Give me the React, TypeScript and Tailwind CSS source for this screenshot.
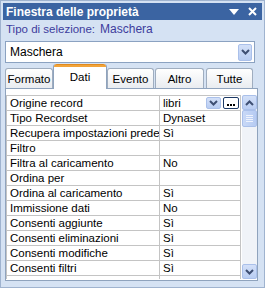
import React from "react";

const rows: [string, string][] = [
  ["Origine record", "libri"],
  ["Tipo Recordset", "Dynaset"],
  ["Recupera impostazioni predefinite", "Sì"],
  ["Filtro", ""],
  ["Filtra al caricamento", "No"],
  ["Ordina per", ""],
  ["Ordina al caricamento", "Sì"],
  ["Immissione dati", "No"],
  ["Consenti aggiunte", "Sì"],
  ["Consenti eliminazioni", "Sì"],
  ["Consenti modifiche", "Sì"],
  ["Consenti filtri", "Sì"],
  ["Blocco record", "Nessun blocco"],
];

function Chevron({ up = false }: { up?: boolean }) {
  return (
    <svg width="9" height="6" viewBox="0 0 9 6">
      <path
        d={up ? "M1 5 L4.5 1.5 L8 5" : "M1 1 L4.5 4.5 L8 1"}
        fill="none"
        stroke="#3e4f73"
        strokeWidth="2"
      />
    </svg>
  );
}

function Tab({ label, w, active = false, extra = "" }: { label: string; w: string; active?: boolean; extra?: string }) {
  if (active) {
    return (
      <div
        className={`${w} ${extra} h-[25px] -mb-px relative z-10 bg-white border-x border-[#8fa3bd] rounded-t-[3px] flex flex-col`}
      >
        <div className="h-[3px] bg-[#f2a43a] rounded-t-[3px] border-t border-[#e08a1e]" />
        <div className="flex-1 flex items-center justify-center pb-[2px] text-black">{label}</div>
      </div>
    );
  }
  return (
    <div
      className={`${w} ${extra} h-[20px] bg-gradient-to-b from-white to-[#e9ecf0] border-x border-t border-[#9fadbf] rounded-t-[3px] flex items-center justify-center text-black`}
    >
      {label}
    </div>
  );
}

export default function App() {
  return (
    <div className="w-[265px] h-[288px] bg-[#d5e2f3] border border-[#9fb3cf] pt-[2px] px-[2px] flex flex-col overflow-hidden font-['Liberation_Sans',Arial,sans-serif] text-[12px] leading-[14px]">
      {/* Title bar */}
      <div className="h-[17px] bg-[#3b64a2] flex items-center pl-[3px] pr-[5px] text-white font-bold shrink-0">
        <span>Finestra delle proprietà</span>
        <div className="ml-auto flex items-center gap-[9px]">
          <svg width="10" height="6" viewBox="0 0 10 6">
            <path d="M0 0 L10 0 L5 6 Z" fill="#ffffff" />
          </svg>
          <svg width="9" height="9" viewBox="0 0 9 9">
            <path d="M1 1 L8 8 M8 1 L1 8" stroke="#ffffff" strokeWidth="2" />
          </svg>
        </div>
      </div>

      {/* Selection type */}
      <div className="h-[17px] flex items-center pl-[3px] text-[#3d3c9d] text-[11.5px] shrink-0">
        <span>Tipo di selezione:</span>
        <span className="ml-[5px] text-[12px]">Maschera</span>
      </div>

      {/* Combo */}
      <div className="mt-[4px] ml-[2px] w-[250px] h-[22px] bg-white border border-[#8ba2c1] flex items-center pl-[4px] pr-[2px] shrink-0 text-black">
        <span>Maschera</span>
        <div className="ml-auto w-[14px] h-[17px] bg-gradient-to-b from-[#d3e0f8] to-[#b9cdf2] border border-[#aac0ea] rounded-[2px] flex items-center justify-center">
          <Chevron />
        </div>
      </div>

      {/* Tabs */}
      <div className="mt-[1px] h-[24px] flex items-end shrink-0 relative z-10 text-[11.5px]">
        <Tab label="Formato" w="w-[48px]" extra="ml-[2px]" />
        <Tab label="Dati" w="w-[54px]" active />
        <Tab label="Evento" w="w-[47px]" />
        <Tab label="Altro" w="w-[49px]" extra="ml-[1px]" />
        <Tab label="Tutte" w="w-[47px]" extra="ml-[2px]" />
      </div>

      {/* Panel */}
      <div className="ml-[2px] w-[253px] h-[193px] bg-white border border-[#8fa3bd] pt-[6px] pb-[1px] flex shrink-0">
        <div className="w-[235px] h-full overflow-hidden border-l border-t border-r border-[#c4c4c4] text-[11.5px]">
          {rows.map(([name, value], i) => (
            <div key={i} className="h-[15px] border-b border-[#c4c4c4] flex text-black">
              <div className="w-[152px] pl-[3px] whitespace-nowrap overflow-hidden flex items-center">{name}</div>
              <div className="flex-1 border-l border-[#c4c4c4] pl-[3px] flex items-center whitespace-nowrap overflow-hidden">
                <span>{value}</span>
                {i === 0 && (
                  <div className="ml-auto flex items-center gap-[2px] pr-[1px]">
                    <div className="w-[15px] h-[12px] bg-gradient-to-b from-[#d3e0f8] to-[#b9cdf2] border border-[#aac0ea] rounded-[2px] flex items-center justify-center">
                      <Chevron />
                    </div>
                    <div className="w-[16px] h-[12px] bg-white border border-[#1d3a66] rounded-[2px] flex items-end justify-center pb-[2px] gap-[1px]">
                      <div className="w-[2px] h-[2px] bg-black" />
                      <div className="w-[2px] h-[2px] bg-black" />
                      <div className="w-[2px] h-[2px] bg-black" />
                    </div>
                  </div>
                )}
              </div>
            </div>
          ))}
        </div>
        {/* Scrollbar */}
        <div className="ml-[1px] w-[15px] h-full bg-[#f0f3f8] flex flex-col">
          <div className="h-[15px] bg-gradient-to-b from-[#d3e0f8] to-[#b9cdf2] border border-[#aac0ea] rounded-[2px] flex items-center justify-center">
            <Chevron up />
          </div>
          <div className="h-[17px] bg-gradient-to-r from-[#c9d9f7] to-[#b6cbf2] border border-[#aac0ea] rounded-[2px] flex flex-col items-center justify-center gap-[1px]">
            <div className="w-[7px] h-px bg-[#eef3fd]" />
            <div className="w-[7px] h-px bg-[#eef3fd]" />
            <div className="w-[7px] h-px bg-[#eef3fd]" />
            <div className="w-[7px] h-px bg-[#eef3fd]" />
          </div>
          <div className="flex-1" />
          <div className="h-[15px] bg-gradient-to-b from-[#d3e0f8] to-[#b9cdf2] border border-[#aac0ea] rounded-[2px] flex items-center justify-center">
            <Chevron />
          </div>
        </div>
      </div>
    </div>
  );
}
